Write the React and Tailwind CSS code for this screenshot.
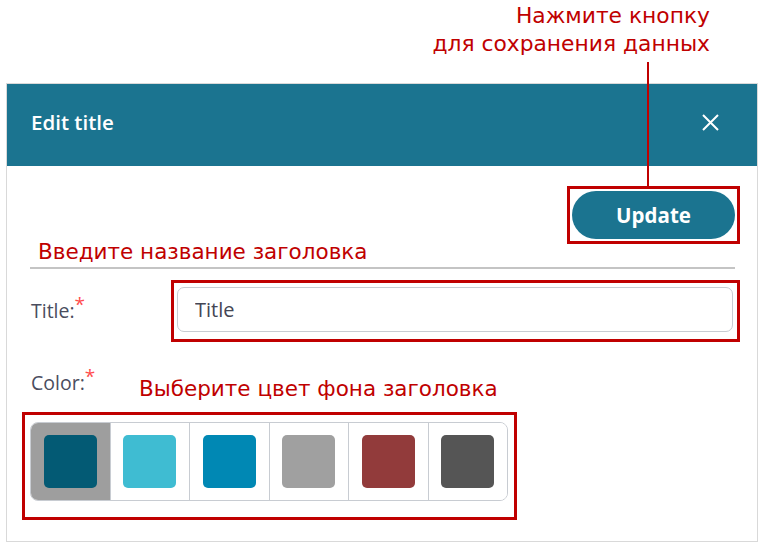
import React from 'react';

const swatches = ['#035a74', '#3fbcd2', '#0088b4', '#a0a0a0', '#923b3b', '#555555'];

const ui = { fontFamily: '"Open Sans", "Noto Sans", sans-serif' };
const note = { fontFamily: '"DejaVu Sans", Verdana, sans-serif' };

const App = () => {
  return (
    <div className="relative w-[765px] h-[547px] bg-white overflow-hidden">
      {/* Callout text */}
      <div className="pt-[2px] pr-[55px] text-right text-[21.8px] leading-[28px] text-[#c00000]" style={note}>
        <div>Нажмите кнопку</div>
        <div>для сохранения данных</div>
      </div>

      {/* Pointer line */}
      <div className="absolute left-[647px] top-[62px] w-[2px] h-[125px] bg-[#c00000] z-10" />

      {/* Dialog */}
      <div className="mt-[25px] ml-[6px] w-[752px] h-[459px] border border-[#d9d9d9]" style={ui}>
        <div className="h-[82px] bg-[#1b7490] flex items-center justify-between pl-[24px] pr-[38px]">
          <h2 className="text-white text-[20.5px] font-semibold mt-[-5px]">Edit title</h2>
          <svg width="17" height="17" viewBox="0 0 17 17" className="mt-[-6px]">
            <path d="M1 1L16 16M16 1L1 16" stroke="white" strokeWidth="2" fill="none" />
          </svg>
        </div>

        <div className="pt-[20px]">
          <div className="flex justify-end pr-[17px]">
            <div className="border-[3px] border-[#c00000] p-[2px]">
              <button className="w-[163px] h-[48px] rounded-full bg-[#1b7490] text-white text-[20.5px] font-bold" style={ui}>
                Update
              </button>
            </div>
          </div>

          <div className="ml-[23px] w-[705px] mt-[-5px] border-b-2 border-[#c4c4c4] pb-[2px]">
            <div className="pl-[8px] text-[21.5px] leading-[26px] text-[#c00000]" style={note}>
              Введите название заголовка
            </div>
          </div>

          <div className="flex items-center mt-[11px]">
            <label className="w-[164px] pl-[24px] text-[19.5px] text-[#4a4d5e]">
              Title:<sup className="text-[#ff4d4d] text-[19px] top-[-7px]">*</sup>
            </label>
            <div className="border-[3px] border-[#c00000] pt-[4px] pl-[3px] pr-[4px] pb-[7px]">
              <input
                readOnly
                value="Title"
                className="block w-[556px] h-[45px] rounded-[7px] border border-[#c8ccd2] px-[17px] text-[20px] text-[#444654] outline-none"
                style={ui}
              />
            </div>
          </div>

          <div className="flex items-end mt-[28px] pl-[24px]">
            <label className="w-[108px] text-[19.5px] text-[#4a4d5e] leading-[26px]">
              Color:<sup className="text-[#ff4d4d] text-[19px] top-[-7px]">*</sup>
            </label>
            <div className="text-[21.5px] leading-[26px] text-[#c00000] mb-[-6px]" style={note}>
              Выберите цвет фона заголовка
            </div>
          </div>

          <div className="ml-[15px] mt-[16px] w-[495px] border-[3px] border-[#c00000] pt-[7px] pl-[5px] pr-[6px] pb-[16px]">
            <div className="flex w-[478px] h-[79px] rounded-[8px] border border-[#c8ccd2] overflow-hidden">
              {swatches.map((c, i) => (
                <div
                  key={c}
                  className={`flex-1 flex items-center justify-center ${i > 0 ? 'border-l border-[#c8ccd2]' : ''} ${i === 0 ? 'bg-[#9e9e9e]' : 'bg-white'}`}
                >
                  <div className="w-[53px] h-[53px] rounded-[5px]" style={{ backgroundColor: c }} />
                </div>
              ))}
            </div>
          </div>
        </div>
      </div>
    </div>
  );
};

export default App;
